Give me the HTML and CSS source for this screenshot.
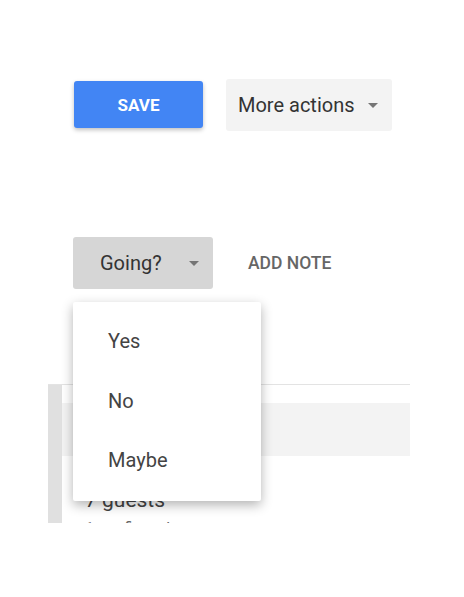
FILE: index.html
```html
<!DOCTYPE html>
<html lang="en">
<head>
    <meta charset="UTF-8">
    <meta name="viewport" content="width=device-width, initial-scale=1.0">
    <title>Event actions</title>
    <link rel="stylesheet" href="styles.css">
</head>
<body>
    <div class="page">
        <div class="toolbar">
            <button class="btn-save">SAVE</button>
            <button class="btn-more">More actions <span class="caret"></span></button>
        </div>

        <div class="rsvp">
            <button class="btn-going">Going? <span class="caret"></span></button>
            <button class="btn-note">ADD NOTE</button>

            <ul class="menu">
                <li>Yes</li>
                <li>No</li>
                <li>Maybe</li>
            </ul>
        </div>

        <div class="card">
            <div class="card-bar"></div>
            <div class="card-body">
                <div class="card-band"></div>
                <div class="guests">7 guests</div>
                <div class="guests-sub">1 confirmed</div>
            </div>
        </div>
    </div>
</body>
</html>
```

FILE: styles.css
```css
body {
    margin: 0;
    background: #ffffff;
    font-family: Roboto, 'Liberation Sans', sans-serif;
    color: #333333;
}
button {
    font-family: inherit;
    border: none;
    cursor: pointer;
}
.page {
    padding-top: 79px;
}
.toolbar {
    display: flex;
    align-items: center;
    gap: 23px;
    margin-left: 74px;
}
.btn-save {
    width: 129px;
    height: 47px;
    margin-top: -1px;
    background-color: #4285f4;
    color: #ffffff;
    font-size: 17px;
    font-weight: bold;
    border-radius: 3px;
    box-shadow: 0px 2px 4px rgba(0, 0, 0, 0.25);
}
.btn-more {
    display: flex;
    align-items: center;
    width: 166px;
    height: 52px;
    padding: 0 0 0 12px;
    background-color: #f3f3f3;
    color: #333333;
    font-size: 20px;
    border-radius: 3px;
}
.btn-more .caret {
    margin-left: 13px;
}
.caret {
    display: inline-block;
    width: 0;
    height: 0;
    border-left: 5px solid transparent;
    border-right: 5px solid transparent;
    border-top: 5px solid #757575;
}
.rsvp {
    position: relative;
    display: flex;
    align-items: center;
    margin: 106px 0 0 73px;
}
.btn-going {
    display: flex;
    align-items: center;
    width: 140px;
    height: 52px;
    padding: 0 0 0 27px;
    background-color: #d6d6d6;
    color: #333333;
    font-size: 20px;
    border-radius: 3px;
}
.btn-going .caret {
    margin-left: 27px;
}
.btn-note {
    margin-left: 35px;
    padding: 0;
    background: none;
    color: #666666;
    font-size: 17.5px;
    font-weight: 500;
}
.menu {
    position: absolute;
    top: 65px;
    left: 0;
    z-index: 2;
    width: 188px;
    margin: 0;
    padding: 10px 0;
    list-style: none;
    background: #ffffff;
    border-radius: 2px;
    box-shadow: 0px 4px 12px rgba(0, 0, 0, 0.3);
}
.menu li {
    height: 59.5px;
    line-height: 59.5px;
    padding-left: 35px;
    font-size: 20px;
    color: #444444;
}
.card {
    display: flex;
    width: 362px;
    height: 138px;
    margin: 95px 0 0 48px;
    border-top: 1px solid #e3e3e3;
    overflow: hidden;
}
.card-bar {
    width: 14px;
    background-color: #e0e0e0;
}
.card-body {
    flex: 1;
}
.card-band {
    height: 53px;
    margin-top: 18px;
    background-color: #f3f3f3;
}
.guests {
    margin: 32px 0 0 23px;
    font-size: 21px;
    line-height: 24px;
    color: #444444;
}
.guests-sub {
    margin: 7px 0 0 23px;
    font-size: 16px;
    color: #666666;
}
```
